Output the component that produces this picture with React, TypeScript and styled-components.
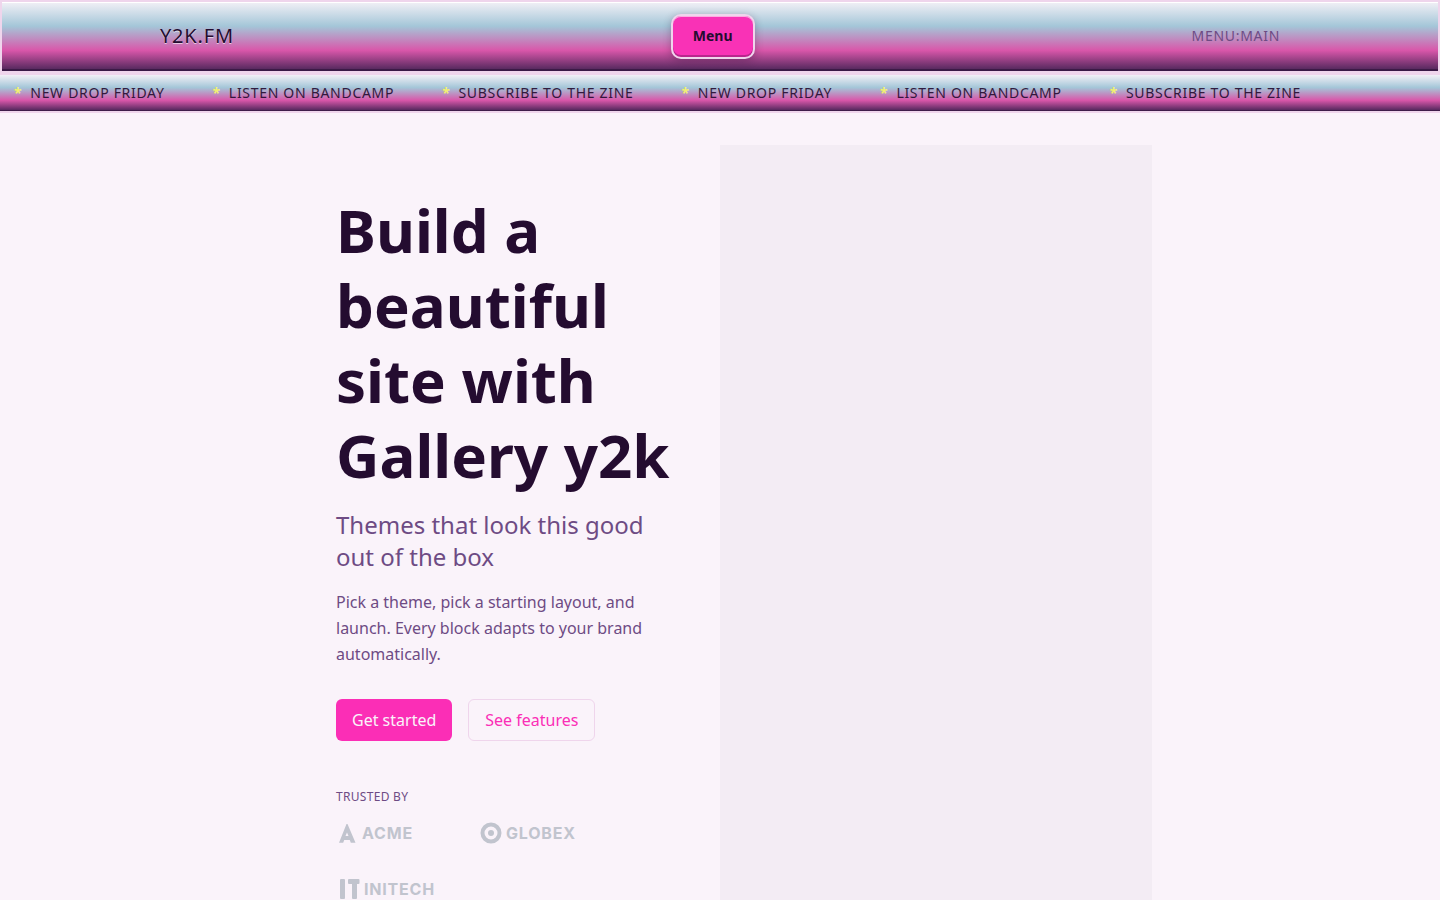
import React from "react";
import styled, { createGlobalStyle } from "styled-components";

const font = `"Noto Sans", "Liberation Sans", sans-serif`;
const chrome =
  "linear-gradient(180deg, #f2f0f6 0%, #a4c6d8 35%, #d957aa 70%, #4b2558 100%)";

const GlobalStyle = createGlobalStyle`
  *, *::before, *::after { box-sizing: border-box; }
  body { margin: 0; background: #faf3fa; color: #240c30; font: 16px/26px ${font}; }
  h1, p, ul { margin: 0; padding: 0; }
`;

const Header = styled.header`
  padding: 12px 24px;
  border: 2px solid #efd5ec;
  background: ${chrome};
  box-shadow: inset 0 1px 0 #fff, inset 0 -2px 0 rgba(36, 12, 48, 0.5);
`;

const HeaderInner = styled.div`
  display: flex;
  align-items: center;
  justify-content: space-between;
  max-width: 1120px;
  margin: 0 auto;
`;

const Brand = styled.a`
  padding-bottom: 2px;
  color: #240c30;
  font-size: 20px;
  line-height: 32px;
  letter-spacing: 0.04em;
  text-decoration: none;
  text-shadow: 0 1px 0 rgba(255, 255, 255, 0.6);
`;

const MenuButton = styled.button`
  padding: 8px 20px 9px;
  border: 2px solid #efd5ec;
  border-radius: 10px;
  background: #f932b6;
  color: #240c30;
  font: 700 14px/24px ${font};
  box-shadow: inset 0 1px 0 rgba(255, 255, 255, 0.6), inset 0 -2px 0 rgba(36, 12, 48, 0.3),
    0 2px 8px rgba(36, 12, 48, 0.3);
`;

const MenuLabel = styled.span`
  padding-bottom: 2px;
  color: #6e4b84;
  font-size: 14px;
  line-height: 22px;
  letter-spacing: 0.05em;
`;

const Ticker = styled.div`
  overflow: hidden;
  padding: 6px 14px;
  border: solid #efd5ec;
  border-width: 2px 0;
  background: ${chrome};
  box-shadow: inset 0 -1px 0 rgba(36, 12, 48, 0.4);
`;

const TickerTrack = styled.ul`
  display: flex;
  gap: 48px;
  width: max-content;
  list-style: none;
`;

const TickerItem = styled.li`
  display: flex;
  gap: 8px;
  color: #240c30;
  font-size: 14px;
  line-height: 24px;
  letter-spacing: 0.05em;
  opacity: 0.9;

  &::before {
    content: "*";
    color: #f8f868;
    font-weight: 700;
  }
`;

const Hero = styled.main`
  display: grid;
  grid-template-columns: 1fr 1fr;
  width: 60%;
  min-width: 720px;
  margin: 32px auto;
`;

const HeroText = styled.section`
  padding: 48px;
`;

const HeroMedia = styled.div`
  min-height: 808px;
  background: #f3ecf4;
`;

const Title = styled.h1`
  font-size: 60px;
  line-height: 75px;
  font-weight: 700;
`;

const Subtitle = styled.p`
  margin-top: 16px;
  color: #6e4b84;
  font-size: 24px;
  line-height: 32px;
`;

const Copy = styled.p`
  margin-top: 16px;
  color: #6e4b84;
`;

const Actions = styled.div`
  display: flex;
  gap: 16px;
  margin-top: 32px;
`;

const Action = styled.a`
  padding: 7px 16px;
  border: 1px solid #efd5ec;
  border-radius: 6px;
  color: #fb2eb6;
  text-decoration: none;
`;

const PrimaryAction = styled(Action)`
  padding: 8px 16px;
  border: 0;
  background: #fb2eb6;
  color: #faf3fa;
`;

const Trusted = styled.p`
  margin-top: 48px;
  color: #6e4b84;
  font-size: 12px;
  line-height: 16px;
  letter-spacing: 0.025em;
`;

const Logos = styled.ul`
  display: flex;
  flex-wrap: wrap;
  gap: 24px;
  margin-top: 12px;
  list-style: none;
`;

const Logo = styled.li`
  display: flex;
  width: 120px;
  height: 32px;

  svg {
    fill: #c1c4ce;
    font: 700 16px Inter, sans-serif;
    letter-spacing: 0.05em;
  }
`;

const messages = ["NEW DROP FRIDAY", "LISTEN ON BANDCAMP", "SUBSCRIBE TO THE ZINE"];

export default function App() {
  return (
    <>
      <GlobalStyle />
      <Header>
        <HeaderInner>
          <Brand href="#">Y2K.FM</Brand>
          <MenuButton type="button">Menu</MenuButton>
          <MenuLabel>MENU:MAIN</MenuLabel>
        </HeaderInner>
      </Header>
      <Ticker>
        <TickerTrack>
          {[...messages, ...messages].map((message, i) => (
            <TickerItem key={i}>{message}</TickerItem>
          ))}
        </TickerTrack>
      </Ticker>
      <Hero>
        <HeroText>
          <Title>Build a beautiful site with Gallery y2k</Title>
          <Subtitle>Themes that look this good out of the box</Subtitle>
          <Copy>
            Pick a theme, pick a starting layout, and launch. Every block adapts to your brand
            automatically.
          </Copy>
          <Actions>
            <PrimaryAction href="#start">Get started</PrimaryAction>
            <Action href="#features">See features</Action>
          </Actions>
          <Trusted>TRUSTED BY</Trusted>
          <Logos>
            <Logo>
              <svg width="120" height="32" role="img" aria-label="Acme">
                <path
                  fillRule="evenodd"
                  d="M10.500 7h1L19.500 25.700h-4.700l-1-2.700H8.200l-1 2.700H3zM11 15.500l-1.500 3.500h3z"
                />
                <text x="26" y="22">ACME</text>
              </svg>
            </Logo>
            <Logo>
              <svg width="120" height="32" role="img" aria-label="Globex">
                <path
                  fillRule="evenodd"
                  d="M11 5.500a10.500 10.500 0 1 0 0 21a10.500 10.500 0 1 0 0-21zM11 9.500a6.500 6.500 0 1 1 0 13a6.500 6.500 0 1 1 0-13z"
                />
                <circle cx="11" cy="16" r="3" />
                <text x="26" y="22">GLOBEX</text>
              </svg>
            </Logo>
            <Logo>
              <svg width="120" height="32" role="img" aria-label="Initech">
                <rect x="4" y="6" width="5" height="20" rx="1" />
                <rect x="12" y="6" width="11.500" height="5" rx="1" />
                <rect x="16" y="6" width="5" height="20" rx="1" />
                <text x="28" y="22">INITECH</text>
              </svg>
            </Logo>
          </Logos>
        </HeroText>
        <HeroMedia />
      </Hero>
    </>
  );
}
